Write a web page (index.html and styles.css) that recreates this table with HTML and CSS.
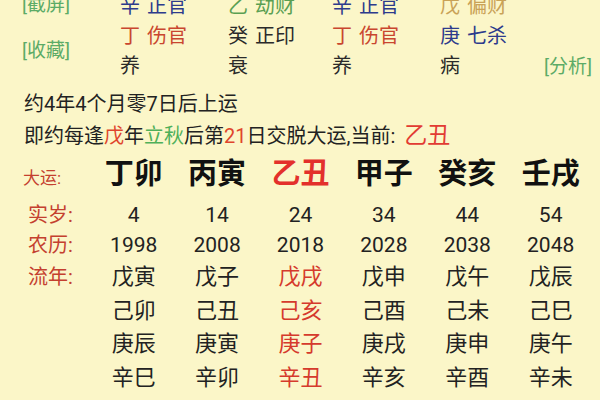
FILE: index.html
```html
<!DOCTYPE html>
<html lang="zh">
<head>
<meta charset="utf-8">
<link rel="stylesheet" href="styles.css">
</head>
<body>
<div class="page">
  <div class="top">
    <div class="tag tag-shot">[截屏]</div>
    <div class="cell blue"><span class="stem">辛</span>正官</div>
    <div class="cell green"><span class="stem">乙</span>劫财</div>
    <div class="cell blue"><span class="stem">辛</span>正官</div>
    <div class="cell tan"><span class="stem">戊</span>偏财</div>
    <div class="cell"></div>

    <div class="tag tag-fav">[收藏]</div>
    <div class="cell red"><span class="stem">丁</span>伤官</div>
    <div class="cell dark"><span class="stem">癸</span>正印</div>
    <div class="cell red"><span class="stem">丁</span>伤官</div>
    <div class="cell blue"><span class="stem">庚</span>七杀</div>
    <div class="cell"></div>

    <div class="cell dark">养</div>
    <div class="cell dark">衰</div>
    <div class="cell dark">养</div>
    <div class="cell dark">病</div>
    <div class="tag tag-ana">[分析]</div>
  </div>

  <div class="info">
    <div class="line">约4年4个月零7日后上运</div>
    <div class="line">即约每逢<span class="c-red">戊</span>年<span class="c-green">立秋</span>后第<span class="c-red">21</span>日交脱大运,当前: <span class="cur">乙丑</span></div>
  </div>

  <div class="row dayun">
    <div class="lab lab-dy">大运:</div>
    <div class="big">丁卯</div>
    <div class="big">丙寅</div>
    <div class="big hot">乙丑</div>
    <div class="big">甲子</div>
    <div class="big">癸亥</div>
    <div class="big">壬戌</div>
  </div>

  <div class="row num">
    <div class="lab">实岁:</div>
    <div>4</div><div>14</div><div>24</div><div>34</div><div>44</div><div>54</div>
  </div>
  <div class="row num">
    <div class="lab">农历:</div>
    <div>1998</div><div>2008</div><div>2018</div><div>2028</div><div>2038</div><div>2048</div>
  </div>
  <div class="row ln">
    <div class="lab">流年:</div>
    <div>戊寅</div><div>戊子</div><div class="hot2">戊戌</div><div>戊申</div><div>戊午</div><div>戊辰</div>
  </div>
  <div class="row ln">
    <div class="lab"></div>
    <div>己卯</div><div>己丑</div><div class="hot2">己亥</div><div>己酉</div><div>己未</div><div>己巳</div>
  </div>
  <div class="row ln">
    <div class="lab"></div>
    <div>庚辰</div><div>庚寅</div><div class="hot2">庚子</div><div>庚戌</div><div>庚申</div><div>庚午</div>
  </div>
  <div class="row ln">
    <div class="lab"></div>
    <div>辛巳</div><div>辛卯</div><div class="hot2">辛丑</div><div>辛亥</div><div>辛酉</div><div>辛未</div>
  </div>
</div>
</body>
</html>
```

FILE: styles.css
```css
html, body {
  margin: 0;
  padding: 0;
  height: 100%;
  overflow: hidden;
}
body {
  background: #fbf6c8;
  font-family: Roboto, "Noto Sans CJK SC", sans-serif;
  color: #222;
}
.page {
  width: 600px;
  height: 400px;
  overflow: hidden;
}
.top {
  display: grid;
  grid-template-columns: 100px 108px 104px 108px 102px 1fr;
  grid-auto-rows: 30px;
  padding-left: 20px;
  margin-top: -9px;
  align-items: center;
}
.cell {
  font-size: 20px;
  line-height: 30px;
  white-space: nowrap;
}
.stem {
  margin-right: 7px;
}
.tag {
  font-size: 19px;
  color: #5cab66;
  line-height: 30px;
  white-space: nowrap;
  margin-left: 2px;
}
.tag-shot {
  margin-top: -3px;
}
.tag-fav {
  grid-row: 2 / span 2;
  grid-column: 1;
  align-self: center;
}
.tag-ana {
  grid-row: 3;
  grid-column: 6;
  margin-top: 2px;
}
.blue { color: #2d3b8c; }
.green { color: #5a9f52; }
.tan { color: #c9a257; }
.red { color: #c9462f; }
.dark { color: #2a2a2a; }

.info {
  padding-left: 24px;
  margin-top: 7px;
}
.line {
  font-size: 20px;
  line-height: 32px;
  white-space: nowrap;
  color: #222;
}
.c-red { color: #e0452c; }
.c-green { color: #4fb05a; }
.cur {
  color: #e23b33;
  font-size: 23px;
  margin-left: 4px;
}

.row {
  display: grid;
  grid-template-columns: 92px repeat(6, 83.4px);
  align-items: baseline;
  text-align: center;
  white-space: nowrap;
}
.lab {
  text-align: left;
  padding-left: 28px;
  color: #c4402f;
  font-size: 20px;
}
.dayun {
  height: 48px;
  line-height: 44px;
}
.lab-dy {
  padding-left: 23px;
  font-size: 17px;
}
.big {
  font-size: 29px;
  font-weight: bold;
  color: #111;
}
.big.hot { color: #e3302b; }
.num {
  height: 30px;
  line-height: 30px;
  font-size: 21px;
  color: #222;
}
.ln {
  height: 33.5px;
  line-height: 33.5px;
  font-size: 22px;
  color: #222;
}
.hot2 { color: #d53a2c; }
```
